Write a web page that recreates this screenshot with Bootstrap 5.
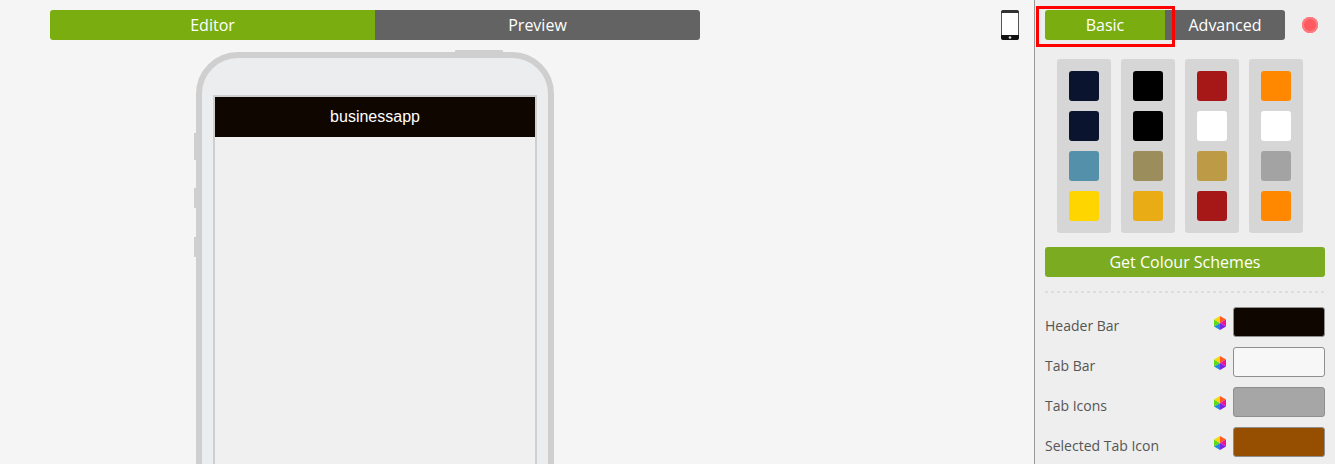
<!DOCTYPE html>
<html lang="en">
<head>
<meta charset="utf-8">
<title>Theme editor</title>
<link href="https://cdn.jsdelivr.net/npm/bootstrap@5.3.0/dist/css/bootstrap.min.css" rel="stylesheet">
<style>
html, body { height: 464px; overflow: hidden; }
body { background: #f5f5f5; font-family: "Open Sans", sans-serif; color: #555; }
.stage { height: 464px; }
.canvas-area { width: 1034px; }
.seg-btn { height: 30px; line-height: 30px; color: #fff; font-size: 16px; text-align: center; background: #636363; padding: 0; }
.seg-btn.on { background: #7aad0f; }
.seg-btn.start { border-radius: 3px 0 0 3px; }
.seg-btn.end { border-radius: 0 3px 3px 0; }
.mode-tabs { width: 650px; margin-left: 50px; padding-top: 10px; }
.mode-tabs .seg-btn { width: 325px; }
.device-icon { margin-top: 10px; margin-left: 301px; display: block; }
.phone { width: 358px; height: 600px; margin: 12px 0 0 196px; position: relative; background: #ecedef; border: 6px solid #cfcfcf; border-radius: 42px 42px 0 0; padding-top: 37px; padding-left: 11px; }
.phone-key { position: absolute; background: #cfcfcf; }
.key-top { left: 253px; top: -8px; width: 48px; height: 3px; border-radius: 1px 1px 0 0; }
.key-a { left: -8px; top: 75px; width: 2px; height: 27px; }
.key-b { left: -8px; top: 130px; width: 2px; height: 20px; }
.key-c { left: -8px; top: 179px; width: 2px; height: 20px; }
.screen { width: 324px; height: 500px; background: #f0f0f0; border: 2px solid #cfcfcf; border-bottom: 0; }
.app-header { height: 40px; background: #100600; color: #fff; font-family: "Liberation Sans", sans-serif; font-size: 16px; line-height: 40px; text-align: center; }
.side-panel { width: 301px; background: #eee; border-left: 1px solid #999; padding: 10px 10px 0 10px; position: relative; }
.panel-tabs .seg-btn { width: 120px; }
.record-dot { width: 16px; height: 16px; border-radius: 50%; background: #ff5a5f; box-shadow: 0 0 0 2px #ff7a7e inset; margin-left: 17px; }
.callout { position: absolute; left: 1px; top: 6px; width: 139px; height: 41px; border: 3px solid #f00; pointer-events: none; }
.palette { gap: 10px; margin: 19px 0 0 12px; }
.palette-col { width: 54px; height: 174px; background: #d6d6d6; border-radius: 3px; padding: 12px; display: flex; flex-direction: column; gap: 10px; }
.chip { width: 30px; height: 30px; border-radius: 3px; }
.scheme-btn { display: block; width: 280px; height: 30px; line-height: 30px; margin-top: 14px; background: #7bab21; color: #fff; font-size: 16px; text-align: center; border-radius: 3px; }
.dash-line { height: 2px; background: repeating-linear-gradient(90deg, #ddd 0 3px, transparent 3px 6px); margin: 14px 0 14px; }
.prop-row { height: 30px; margin-bottom: 10px; }
.prop-label { font-size: 14px; color: #555; width: 168px; padding-top: 7px; line-height: 20px; }
.hex-icon { display: block; margin-top: 1px; }
.prop-swatch { width: 92px; height: 30px; border: 1px solid #8f8f8f; border-radius: 3px; margin-left: 6px; }
</style>
</head>
<body>
<div class="stage d-flex">
  <main class="canvas-area flex-shrink-0">
    <div class="d-flex">
      <div class="mode-tabs d-flex">
        <div class="seg-btn on start">Editor</div>
        <div class="seg-btn end">Preview</div>
      </div>
      <svg class="device-icon" width="18" height="30" viewBox="0 0 18 30" aria-label="Phone">
        <rect x="0.5" y="0.5" width="17" height="29" rx="2" fill="#fff" stroke="#555" stroke-width="1"/>
        <path d="M0 2a2 2 0 0 1 2-2h14a2 2 0 0 1 2 2v1H0z" fill="#333"/>
        <path d="M0 25h18v3a2 2 0 0 1-2 2H2a2 2 0 0 1-2-2z" fill="#111"/>
        <circle cx="9" cy="27.5" r="1.3" fill="#ddd"/>
      </svg>
    </div>
    <div class="phone">
      <span class="phone-key key-top"></span>
      <span class="phone-key key-a"></span>
      <span class="phone-key key-b"></span>
      <span class="phone-key key-c"></span>
      <div class="screen">
        <div class="app-header">businessapp</div>
      </div>
    </div>
  </main>
  <aside class="side-panel flex-shrink-0">
    <div class="panel-tabs d-flex align-items-center">
      <div class="seg-btn on start">Basic</div>
      <div class="seg-btn end">Advanced</div>
      <span class="record-dot"></span>
    </div>
    <div class="callout"></div>
    <div class="palette d-flex">
      <div class="palette-col">
        <div class="chip" style="background:#0a142e"></div>
        <div class="chip" style="background:#0a142e"></div>
        <div class="chip" style="background:#5590ab"></div>
        <div class="chip" style="background:#ffd500"></div>
      </div>
      <div class="palette-col">
        <div class="chip" style="background:#000"></div>
        <div class="chip" style="background:#000"></div>
        <div class="chip" style="background:#9c8d5d"></div>
        <div class="chip" style="background:#e9ac15"></div>
      </div>
      <div class="palette-col">
        <div class="chip" style="background:#a61717"></div>
        <div class="chip" style="background:#fff"></div>
        <div class="chip" style="background:#bd9a45"></div>
        <div class="chip" style="background:#a61717"></div>
      </div>
      <div class="palette-col">
        <div class="chip" style="background:#ff8800"></div>
        <div class="chip" style="background:#fff"></div>
        <div class="chip" style="background:#a3a3a3"></div>
        <div class="chip" style="background:#ff8800"></div>
      </div>
    </div>
    <div class="scheme-btn">Get Colour Schemes</div>
    <div class="dash-line"></div>

    <svg width="0" height="0" class="position-absolute">
      <defs>
        <g id="hexmark">
          <polygon points="7,7 7,0 13,3.5" fill="#ff5a1e"/>
          <polygon points="7,7 13,3.5 13,10.5" fill="#f0109a"/>
          <polygon points="7,7 13,10.5 7,14" fill="#7a22e8"/>
          <polygon points="7,7 7,14 1,10.5" fill="#1e8ae0"/>
          <polygon points="7,7 1,10.5 1,3.5" fill="#5fd81e"/>
          <polygon points="7,7 1,3.5 7,0" fill="#f6d90f"/>
        </g>
      </defs>
    </svg>

    <div class="prop-row d-flex align-items-center">
      <div class="prop-label">Header Bar</div>
      <svg class="hex-icon" width="14" height="14" viewBox="0 0 14 14"><use href="#hexmark"/></svg>
      <div class="prop-swatch" style="background:#100600"></div>
    </div>
    <div class="prop-row d-flex align-items-center">
      <div class="prop-label">Tab Bar</div>
      <svg class="hex-icon" width="14" height="14" viewBox="0 0 14 14"><use href="#hexmark"/></svg>
      <div class="prop-swatch" style="background:#f7f7f7"></div>
    </div>
    <div class="prop-row d-flex align-items-center">
      <div class="prop-label">Tab Icons</div>
      <svg class="hex-icon" width="14" height="14" viewBox="0 0 14 14"><use href="#hexmark"/></svg>
      <div class="prop-swatch" style="background:#a6a6a6"></div>
    </div>
    <div class="prop-row d-flex align-items-center">
      <div class="prop-label">Selected Tab Icon</div>
      <svg class="hex-icon" width="14" height="14" viewBox="0 0 14 14"><use href="#hexmark"/></svg>
      <div class="prop-swatch" style="background:#964f00"></div>
    </div>
  </aside>
</div>
<script src="https://cdn.jsdelivr.net/npm/bootstrap@5.3.0/dist/js/bootstrap.bundle.min.js"></script>
</body>
</html>
